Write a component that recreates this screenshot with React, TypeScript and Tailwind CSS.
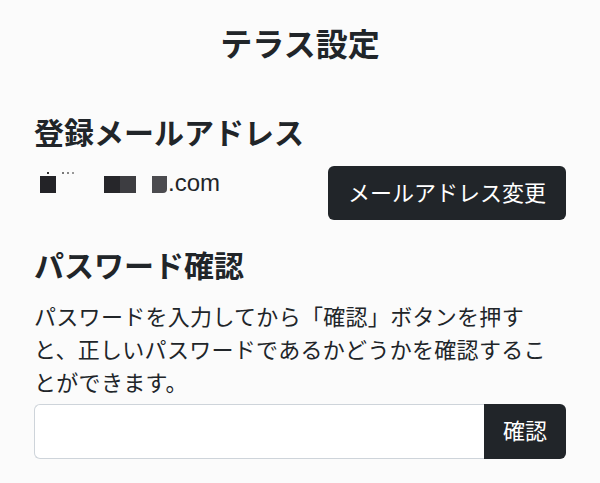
import React from "react";

const FONT = { fontFamily: '"Liberation Sans", "Noto Sans CJK JP", sans-serif' };

function MaskedEmail() {
    return (
        <div className="flex h-[33px] items-center leading-[33px]">
            <div className="relative ml-[6px] mt-[3px] flex h-[17px] items-center">
                <span className="h-[17px] w-[16px] bg-[#232327]" />
                <span className="absolute left-[7px] top-[-4px] h-[2px] w-[2px] bg-[#333]" />
                <span className="absolute left-[22px] top-[-4px] h-[2px] w-[2px] bg-[#777]" />
                <span className="absolute left-[27px] top-[-4px] h-[2px] w-[2px] bg-[#888]" />
                <span className="absolute left-[32px] top-[-4px] h-[2px] w-[2px] bg-[#999]" />
                <span className="ml-[48px] h-[17px] w-[16px] bg-[#26262a]" />
                <span className="h-[17px] w-[16px] bg-[#3d3d41]" />
                <span className="ml-[16px] h-[17px] w-[15px] rounded-br-[4px] bg-[#4b4b4f]" />
            </div>
            <span className="ml-[1px] text-[24px] text-[#212529]">.com</span>
        </div>
    );
}

export default function App() {
    return (
        <div className="min-h-screen bg-[#fbfbfb] px-[34px] text-[#212529] [text-spacing-trim:space-all]" style={FONT}>
            <h1 className="pt-[26px] text-center text-[32px] font-bold leading-[38px]">テラス設定</h1>

            <h2 className="mt-[52px] text-[30px] font-bold leading-[36px]">登録メールアドレス</h2>
            <div className="mt-[14px] flex items-start justify-between">
                <MaskedEmail />
                <button className="h-[54px] rounded-[6px] bg-[#212529] px-[20px] text-[22px] leading-[33px] text-white">
                    メールアドレス変更
                </button>
            </div>

            <h2 className="mt-[29px] text-[30px] font-bold leading-[36px]">パスワード確認</h2>
            <p className="mt-[16px] text-[22px] leading-[33px] tracking-[0.3px]">
                パスワードを入力してから「確認」ボタンを押すと、正しいパスワードであるかどうかを確認することができます。
            </p>
            <div className="mt-[4px] flex h-[55px]">
                <input
                    type="password"
                    className="min-w-0 flex-1 rounded-l-[6px] border border-r-0 border-[#ced4da] bg-white px-3 text-[22px] outline-none"
                />
                <button className="w-[82px] rounded-r-[6px] bg-[#212529] text-[22px] text-white">確認</button>
            </div>
        </div>
    );
}
